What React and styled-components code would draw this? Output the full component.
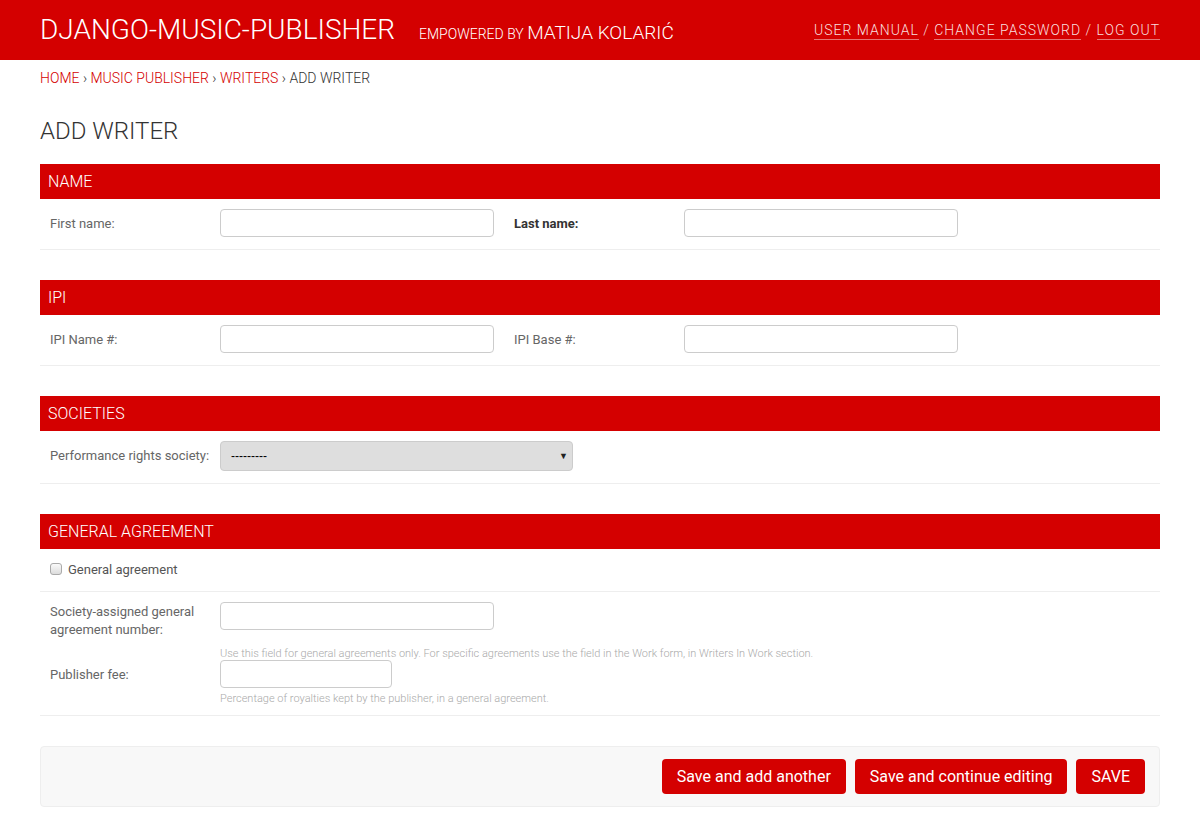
import styled, { createGlobalStyle } from 'styled-components';

const RED = '#d40000';
const LIGHT = '"Roboto Light", Roboto, "Liberation Sans", sans-serif';

const GlobalStyle = createGlobalStyle`
  html, body {
    margin: 0;
    padding: 0;
    background: #fff;
    font-family: Roboto, "Liberation Sans", sans-serif;
    color: #333;
  }
  * { box-sizing: border-box; }
`;

const App = () => {
  return (
    <>
      <GlobalStyle />
      <Header>
        <Branding>
          <SiteName>DJANGO-MUSIC-PUBLISHER</SiteName>
          <Powered>EMPOWERED BY <Author>MATIJA KOLARIĆ</Author></Powered>
        </Branding>
        <UserTools>
          <ToolLink>USER MANUAL</ToolLink> / <ToolLink>CHANGE PASSWORD</ToolLink> / <ToolLink>LOG OUT</ToolLink>
        </UserTools>
      </Header>
      <Breadcrumbs>
        <Crumb>HOME</Crumb> › <Crumb>MUSIC PUBLISHER</Crumb> › <Crumb>WRITERS</Crumb> › ADD WRITER
      </Breadcrumbs>
      <Content>
        <PageTitle>ADD WRITER</PageTitle>
        <form>
          <Module>
            <ModuleTitle>NAME</ModuleTitle>
            <FormRow>
              <FieldBox>
                <Label>First name:</Label>
                <TextInput />
              </FieldBox>
              <FieldBox>
                <Label $required>Last name:</Label>
                <TextInput />
              </FieldBox>
            </FormRow>
          </Module>

          <Module>
            <ModuleTitle>IPI</ModuleTitle>
            <FormRow>
              <FieldBox>
                <Label>IPI Name #:</Label>
                <TextInput />
              </FieldBox>
              <FieldBox>
                <Label>IPI Base #:</Label>
                <TextInput />
              </FieldBox>
            </FormRow>
          </Module>

          <Module>
            <ModuleTitle>SOCIETIES</ModuleTitle>
            <FormRow>
              <FieldBox>
                <Label>Performance rights society:</Label>
                <SelectBox>
                  <span>---------</span>
                  <Caret>▼</Caret>
                </SelectBox>
              </FieldBox>
            </FormRow>
          </Module>

          <Module>
            <ModuleTitle>GENERAL AGREEMENT</ModuleTitle>
            <CheckRow>
              <Checkbox />
              <CheckLabel>General agreement</CheckLabel>
            </CheckRow>
            <FormRow $stacked>
              <FieldBox>
                <Label $top={1}>Society-assigned general agreement number:</Label>
                <div>
                  <TextInput />
                  <Help $gap={17}>Use this field for general agreements only. For specific agreements use the field in the Work form, in Writers In Work section.</Help>
                </div>
              </FieldBox>
              <FieldBox>
                <Label>Publisher fee:</Label>
                <div>
                  <TextInput $width={172} />
                  <Help $gap={4}>Percentage of royalties kept by the publisher, in a general agreement.</Help>
                </div>
              </FieldBox>
            </FormRow>
          </Module>

          <SubmitRow>
            <Button type="button">Save and add another</Button>
            <Button type="button">Save and continue editing</Button>
            <Button type="button">SAVE</Button>
          </SubmitRow>
        </form>
      </Content>
    </>
  );
};

const Header = styled.div`
  height: 60px;
  padding: 0 40px;
  background: ${RED};
  color: #fff;
  display: flex;
  align-items: center;
  justify-content: space-between;
`;
const Branding = styled.div`
  display: flex;
  align-items: baseline;
  gap: 24px;
  margin-top: -2px;
  font-family: ${LIGHT};
`;
const SiteName = styled.div`
  font-size: 28px;
  font-weight: 300;
`;
const Powered = styled.div`
  font-size: 14px;
  font-weight: 300;
`;
const Author = styled.span`
  font-size: 19px;
`;
const UserTools = styled.div`
  font-family: ${LIGHT};
  font-size: 14px;
  font-weight: 300;
  letter-spacing: 1px;
  color: #f5d6d6;
`;
const ToolLink = styled.a`
  color: #f8dede;
  border-bottom: 1px solid rgba(255, 255, 255, 0.45);
  padding-bottom: 1px;
  cursor: pointer;
`;
const Breadcrumbs = styled.div`
  padding: 10px 40px;
  font-family: ${LIGHT};
  font-size: 14px;
  font-weight: 300;
  color: #333;
`;
const Crumb = styled.a`
  color: ${RED};
  cursor: pointer;
`;
const Content = styled.div`
  padding: 0 40px 20px;
`;
const PageTitle = styled.h1`
  margin: 21px 0 19px;
  font-family: ${LIGHT};
  font-size: 24px;
  font-weight: 300;
  color: #333;
`;
const Module = styled.fieldset`
  margin: 0 0 30px;
  padding: 0;
  border: none;
`;
const ModuleTitle = styled.h2`
  margin: 0;
  height: 35px;
  padding: 0 8px;
  display: flex;
  align-items: center;
  background: ${RED};
  color: #fff;
  font-family: ${LIGHT};
  font-size: 16px;
  font-weight: 300;
`;
const FormRow = styled.div`
  display: flex;
  flex-direction: ${(p) => (p.$stacked ? 'column' : 'row')};
  padding: ${(p) => (p.$stacked ? '10px' : '10px 10px 12px')};
  border-bottom: 1px solid #eee;
`;
const FieldBox = styled.div`
  display: flex;
  align-items: flex-start;
  margin-right: 20px;
`;
const Label = styled.label`
  width: 170px;
  padding: ${(p) => (p.$top !== undefined ? p.$top : 6)}px 10px 0 0;
  font-size: 13px;
  line-height: 18px;
  color: ${(p) => (p.$required ? '#333' : '#666')};
  font-weight: ${(p) => (p.$required ? 700 : 400)};
`;
const TextInput = styled.input`
  display: block;
  width: ${(p) => p.$width || 274}px;
  height: 28px;
  margin: 0;
  border: 1px solid #ccc;
  border-radius: 4px;
  background: #fff;
  font-family: inherit;
`;
const SelectBox = styled.div`
  width: 353px;
  height: 30px;
  padding: 0 4px 0 10px;
  display: flex;
  align-items: center;
  justify-content: space-between;
  background: #dedede;
  border: 1px solid #ccc;
  border-radius: 4px;
  font-family: "Liberation Sans", Arial, sans-serif;
  font-size: 12px;
  color: #000;
`;
const Caret = styled.span`
  font-size: 9px;
  color: #222;
`;
const CheckRow = styled.div`
  display: flex;
  align-items: center;
  gap: 6px;
  height: 43px;
  padding: 0 10px 2px;
  border-bottom: 1px solid #eee;
`;
const Checkbox = styled.span`
  width: 12px;
  height: 12px;
  border: 1px solid #aaa;
  border-radius: 3px;
  background: linear-gradient(#fafafa, #dcdcdc);
`;
const CheckLabel = styled.span`
  font-size: 13px;
  font-weight: 400;
  color: #555;
`;
const Help = styled.div`
  margin-top: ${(p) => p.$gap}px;
  font-family: ${LIGHT};
  font-size: 11px;
  color: #aaa;
  font-weight: 300;
  line-height: 13px;
  white-space: nowrap;
`;
const SubmitRow = styled.div`
  display: flex;
  justify-content: flex-end;
  gap: 9px;
  padding: 12px 14px;
  background: #f8f8f8;
  border: 1px solid #eee;
  border-radius: 4px;
`;
const Button = styled.button`
  height: 35px;
  padding: 0 15px;
  border: none;
  border-radius: 4px;
  background: ${RED};
  color: #fff;
  font-family: Roboto, "Liberation Sans", sans-serif;
  font-size: 16px;
  cursor: pointer;
`;

export default App;
